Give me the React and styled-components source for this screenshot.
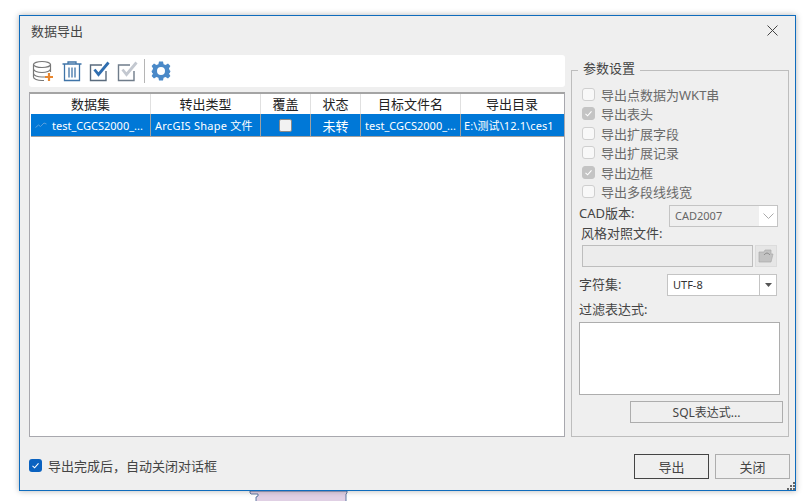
import React from 'react'
import styled, { createGlobalStyle } from 'styled-components'

const GlobalStyle = createGlobalStyle`
    html, body {
        margin: 0;
        padding: 0;
        background: #fff;
        overflow: hidden;
    }
    body {
        font-family: "Noto Sans", "Noto Sans CJK SC", sans-serif;
        font-size: 12px;
        color: #333;
    }
`

const Page = styled.div`
    width: 805px;
    height: 501px;
    padding: 15px 0 0 19px;
    box-sizing: border-box;
    overflow: hidden;
`

const Dialog = styled.div`
    position: relative;
    width: 777px;
    height: 476px;
    box-sizing: border-box;
    border: 1px solid #0f6cbd;
    background: #efefef;
    box-shadow: 0 0 6px rgba(0, 0, 0, 0.3);
    display: flex;
    flex-direction: column;
`

const TitleBar = styled.div`
    height: 39px;
    display: flex;
    align-items: center;
    justify-content: space-between;
    padding: 0 17px 10px 11px;
    box-sizing: border-box;
    font-size: 13px;
    color: #444;
`

const CloseButton = styled.div`
    width: 11px;
    height: 11px;
    display: flex;
`

const Body = styled.div`
    display: flex;
    gap: 6px;
    padding-left: 9px;
`

const LeftColumn = styled.div`
    width: 536px;
    display: flex;
    flex-direction: column;
    gap: 5px;
`

const Toolbar = styled.div`
    height: 32px;
    background: #fff;
    border-radius: 3px;
    display: flex;
    align-items: center;
    padding-left: 3px;
    box-sizing: border-box;
`

const ToolIcon = styled.svg`
    width: 22px;
    height: 22px;
    margin-right: ${p => p.$gap ?? 6}px;
    flex: none;
`

const ToolDivider = styled.div`
    width: 1px;
    height: 24px;
    background: #b5b5b5;
    margin: 0 5px 0 0;
`

const Table = styled.div`
    height: 345px;
    box-sizing: border-box;
    background: #fff;
    border: 1px solid #a8a8ae;
    border-top: 2px solid #a4a4a4;
    padding-left: 1px;
`

const Row = styled.div`
    display: grid;
    grid-template-columns: 120px 110px 50px 50px 100px 102px;
    height: ${p => p.$header ? 20 : 23}px;
    box-sizing: border-box;
`

const HeadCell = styled.div`
    display: flex;
    align-items: center;
    justify-content: center;
    padding-bottom: 4px;
    box-sizing: border-box;
    color: #222;
    font-size: 13px;
    border-right: 1px solid #e0e0e0;
    &:last-child { border-right: 0; }
`

const SelectedRow = styled(Row)`
    background: #0078d7;
    border-bottom: 1px solid #a0a0a0;
    color: #fff;
`

const Cell = styled.div`
    position: relative;
    display: flex;
    align-items: center;
    justify-content: ${p => p.$center ? 'center' : 'flex-start'};
    padding-left: ${p => p.$pad ?? 0}px;
    white-space: nowrap;
    overflow: hidden;
    font-size: ${p => p.$size ?? 11}px;
    letter-spacing: ${p => p.$spacing ?? 0}px;
    border-right: 1px solid #a0a0a0;
    &:last-child { border-right: 0; }
`

const RowMark = styled.svg`
    position: absolute;
    left: 4px;
    top: 7px;
    width: 12px;
    height: 8px;
`

const RowCheck = styled.span`
    width: 11px;
    height: 11px;
    background: #f2f2f2;
    border: 1px solid #8a8a8a;
    border-radius: 2px;
`

const Group = styled.div`
    position: relative;
    width: 218px;
    height: 367px;
    margin-top: 15px;
    box-sizing: border-box;
    border: 1px solid #bdbdbd;
    padding: 16px 0 0 7px;
`

const Legend = styled.div`
    position: absolute;
    top: -11px;
    left: 6px;
    padding: 0 5px;
    background: #efefef;
    font-size: 13px;
    line-height: 16px;
    color: #444;
`

const CheckList = styled.div`
    display: flex;
    flex-direction: column;
    gap: 5.5px;
    padding-left: 3px;
`

const CheckRow = styled.div`
    display: flex;
    align-items: center;
    gap: 6px;
    height: 14px;
    font-size: 13px;
    color: #6a6a6a;
    white-space: nowrap;
`

const Box = styled.span`
    width: 13px;
    height: 13px;
    box-sizing: border-box;
    border-radius: 3px;
    border: 1px solid ${p => p.$checked ? '#c4c4c4' : '#cfcfcf'};
    background: ${p => p.$checked ? '#c4c4c4' : '#f8f8f8'};
    display: flex;
    align-items: center;
    justify-content: center;
    flex: none;
`

const FieldRow = styled.div`
    display: flex;
    align-items: ${p => p.$align ?? 'center'};
    height: 22px;
    margin-top: ${p => p.$top ?? 0}px;
`

const FieldLabel = styled.div`
    width: ${p => p.$width}px;
    flex: none;
    font-size: 13px;
    color: #444;
    white-space: nowrap;
    line-height: 16px;
    padding-left: ${p => p.$pad ?? 0}px;
    padding-bottom: ${p => p.$bottomPad ?? 0}px;
    margin-top: ${p => p.$top ?? 0}px;
    margin-bottom: ${p => p.$bottom ?? 0}px;
    box-sizing: border-box;
`

const ComboBox = styled.div`
    width: ${p => p.$width}px;
    height: 22px;
    box-sizing: border-box;
    background: #fff;
    border: 1px solid #c4c4c4;
    display: flex;
    align-items: center;
    font-size: 11px;
    color: ${p => p.$disabled ? '#666' : '#333'};
`

const ComboText = styled.div`
    flex: 1;
    align-self: stretch;
    display: flex;
    align-items: center;
    padding-left: ${p => p.$pad}px;
    padding-bottom: 1px;
    box-sizing: border-box;
    background: ${p => p.$disabled ? '#efefef' : '#fff'};
`

const ComboArrow = styled.div`
    width: ${p => p.$width}px;
    align-self: stretch;
    display: flex;
    align-items: center;
    justify-content: center;
    box-sizing: border-box;
    border-left: ${p => p.$divider ? '1px solid #c4c4c4' : '0'};
`

const PathInput = styled.div`
    width: 171px;
    height: 22px;
    box-sizing: border-box;
    background: #ececec;
    border: 1px solid #bdbdbd;
`

const BrowseButton = styled.div`
    width: 22px;
    height: 22px;
    margin-left: 2px;
    box-sizing: border-box;
    border: 1px solid #dcdcdc;
    background: #e6e6e6;
    display: flex;
    align-items: center;
    justify-content: center;
`

const TextArea = styled.div`
    width: 201px;
    height: 73px;
    box-sizing: border-box;
    background: #fff;
    border: 1px solid #adadad;
`

const Button = styled.div`
    width: ${p => p.$width}px;
    height: ${p => p.$height}px;
    box-sizing: border-box;
    border: 1px solid ${p => p.$primary ? '#444' : '#adadad'};
    display: flex;
    align-items: center;
    justify-content: center;
    font-size: ${p => p.$size}px;
    color: #444;
`

const SqlRow = styled.div`
    display: flex;
    margin: 6px 0 0 51px;
`

const Footer = styled.div`
    display: flex;
    align-items: center;
    justify-content: space-between;
    height: 25px;
    margin-top: 17px;
    padding: 0 5px 0 9px;
`

const AutoClose = styled.div`
    display: flex;
    align-items: center;
    gap: 6px;
    padding-bottom: 3px;
    font-size: 13px;
    color: #444;
`

const BlueBox = styled.span`
    width: 13px;
    height: 13px;
    border-radius: 3px;
    background: #0a62c0;
    display: flex;
    align-items: center;
    justify-content: center;
`

const FooterButtons = styled.div`
    display: flex;
    gap: 6px;
`

const Grip = styled.svg`
    position: absolute;
    right: 0;
    bottom: 0;
    width: 8px;
    height: 8px;
`

const MapShape = styled.svg`
    display: block;
    width: 110px;
    height: 12px;
    margin-left: 225px;
`

const Tick = ({ color = '#fff' }) => (
    <svg width="9" height="9" viewBox="0 0 9 9">
        <path d="M1.5 4.8 L3.6 6.8 L7.5 2.4" fill="none" stroke={color} strokeWidth="1.1" />
    </svg>
)

const Arrow = () => (
    <svg width="11" height="7" viewBox="0 0 11 7">
        <path d="M0.5 0.5 L5.5 5.5 L10.5 0.5" fill="none" stroke="#aaa" />
    </svg>
)

const options = [
    { label: '导出点数据为WKT串' },
    { label: '导出表头', checked: true },
    { label: '导出扩展字段' },
    { label: '导出扩展记录' },
    { label: '导出边框', checked: true },
    { label: '导出多段线线宽' },
]

const headers = ['数据集', '转出类型', '覆盖', '状态', '目标文件名', '导出目录']

export default function App() {
    return (
        <Page>
            <GlobalStyle />
            <Dialog>
                <TitleBar>
                    <span>数据导出</span>
                    <CloseButton>
                        <svg width="11" height="11" viewBox="0 0 11 11">
                            <path d="M0.5 0.5 L10.5 10.5 M10.5 0.5 L0.5 10.5" stroke="#444" fill="none" />
                        </svg>
                    </CloseButton>
                </TitleBar>
                <Body>
                    <LeftColumn>
                        <Toolbar>
                            <ToolIcon viewBox="0 0 22 22" $gap={7}>
                                <g fill="none" stroke="#777" strokeWidth="1.2">
                                    <ellipse cx="10" cy="4.5" rx="8.5" ry="3" />
                                    <path d="M1.5 4.5 V17 C1.5 19 5.5 20.5 10 20.5 H12" />
                                    <path d="M18.5 4.5 V12" />
                                    <path d="M1.5 9 C1.5 11 5.5 12.5 10 12.5 S18.5 11 18.5 9" />
                                    <path d="M1.5 13.5 C1.5 15.5 5.5 17 10 17 H13" />
                                </g>
                                <path d="M17 13 V21 M13 17 H21" stroke="#e8862e" strokeWidth="2.2" fill="none" />
                            </ToolIcon>
                            <ToolIcon viewBox="0 0 22 22" $gap={6}>
                                <g fill="none" stroke="#3f74a8" strokeWidth="1.3">
                                    <path d="M1.5 4 H20.5 M7 4 V2 H15 V4" />
                                    <path d="M3.5 4 V20.5 H18.5 V4" />
                                    <path d="M8 7.5 V17.5 M11 7.5 V17.5 M14 7.5 V17.5" />
                                </g>
                            </ToolIcon>
                            <ToolIcon viewBox="0 0 22 22" $gap={6}>
                                <path d="M17 11 V20.5 H1.5 V5 H13" fill="none" stroke="#5a6b7d" strokeWidth="1.4" />
                                <path d="M5.5 9.5 L9.5 14.5 L19.5 2.5" fill="none" stroke="#2f6eb0" strokeWidth="2.8" />
                            </ToolIcon>
                            <ToolIcon viewBox="0 0 22 22" $gap={5}>
                                <path d="M17 11 V20.5 H1.5 V5 H13" fill="none" stroke="#6f7c8a" strokeWidth="1.4" />
                                <path d="M5.5 9.5 L9.5 14.5 L19.5 2.5" fill="none" stroke="#c3c8d0" strokeWidth="2.8" />
                            </ToolIcon>
                            <ToolDivider />
                            <ToolIcon viewBox="0 0 22 22">
                                <path
                                    fillRule="evenodd"
                                    fill="#4a89c8"
                                    d="M9 1.5 H13 L13.6 4.2 L15.6 5.1 L18 3.6 L20.4 6 L18.9 8.4 L19.8 10.4 L20.5 11 L19.8 13 L18.9 13.6 L20.4 16 L18 18.4 L15.6 16.9 L13.6 17.8 L13 20.5 H9 L8.4 17.8 L6.4 16.9 L4 18.4 L1.6 16 L3.1 13.6 L2.2 13 L1.5 11 L2.2 10.4 L3.1 8.4 L1.6 6 L4 3.6 L6.4 5.1 L8.4 4.2 Z M11 7 A4 4 0 1 0 11 15 A4 4 0 1 0 11 7 Z"
                                />
                            </ToolIcon>
                        </Toolbar>
                        <Table>
                            <Row $header>
                                {headers.map(h => <HeadCell key={h}>{h}</HeadCell>)}
                            </Row>
                            <SelectedRow>
                                <Cell $pad={21}>
                                    <RowMark viewBox="0 0 12 8">
                                        <path d="M0.5 6.5 L3.5 4 L5.5 5.5 L9 2 L11.5 3" fill="none" stroke="#5a9fdc" />
                                    </RowMark>
                                    test_CGCS2000_...
                                </Cell>
                                <Cell $pad={4} $spacing={0.25}>ArcGIS Shape 文件</Cell>
                                <Cell $center><RowCheck /></Cell>
                                <Cell $center $size={13}>未转</Cell>
                                <Cell $pad={4}>test_CGCS2000_...</Cell>
                                <Cell $pad={3} $spacing={0.1}>E:\测试\12.1\ces1</Cell>
                            </SelectedRow>
                        </Table>
                    </LeftColumn>
                    <Group>
                        <Legend>参数设置</Legend>
                        <CheckList>
                            {options.map(o => (
                                <CheckRow key={o.label}>
                                    <Box $checked={o.checked}>{o.checked && <Tick />}</Box>
                                    {o.label}
                                </CheckRow>
                            ))}
                        </CheckList>
                        <FieldRow $top={6.5} $align="flex-start">
                            <FieldLabel $width={90}>CAD版本:</FieldLabel>
                            <ComboBox $width={109} $disabled>
                                <ComboText $pad={5} $disabled>CAD2007</ComboText>
                                <ComboArrow $width={18}><Arrow /></ComboArrow>
                            </ComboBox>
                        </FieldRow>
                        <FieldLabel $width={200} $pad={2} $top={-2}>风格对照文件:</FieldLabel>
                        <FieldRow $top={4}>
                            <FieldLabel $width={3} />
                            <PathInput />
                            <BrowseButton>
                                <svg width="16" height="14" viewBox="0 0 16 14">
                                    <path d="M1 13 V3 H6 L7 1 H13 V5 H15 L13 13 Z" fill="#c2c2c2" stroke="#aaa" strokeWidth="0.7" />
                                    <path d="M6 6 C8 3.5 10 3.5 12 6" fill="none" stroke="#888" />
                                </svg>
                            </BrowseButton>
                        </FieldRow>
                        <FieldRow $top={7}>
                            <FieldLabel $width={88} $bottomPad={2}>字符集:</FieldLabel>
                            <ComboBox $width={110}>
                                <ComboText $pad={5}>UTF-8</ComboText>
                                <ComboArrow $width={17} $divider>
                                    <svg width="7" height="4" viewBox="0 0 7 4"><path d="M0 0 H7 L3.5 4 Z" fill="#555" /></svg>
                                </ComboArrow>
                            </ComboBox>
                        </FieldRow>
                        <FieldLabel $width={200} $top={5} $bottom={5}>过滤表达式:</FieldLabel>
                        <TextArea />
                        <SqlRow>
                            <Button $width={153} $height={22} $size={12}>SQL表达式...</Button>
                        </SqlRow>
                    </Group>
                </Body>
                <Footer>
                    <AutoClose>
                        <BlueBox><Tick /></BlueBox>
                        导出完成后，自动关闭对话框
                    </AutoClose>
                    <FooterButtons>
                        <Button $width={75} $height={25} $size={13} $primary>导出</Button>
                        <Button $width={75} $height={25} $size={13}>关闭</Button>
                    </FooterButtons>
                </Footer>
                <Grip viewBox="0 0 8 8">
                    <path d="M6 0 H8 V2 H6 Z M3 3 H5 V5 H3 Z M6 3 H8 V5 H6 Z M0 6 H2 V8 H0 Z M3 6 H5 V8 H3 Z M6 6 H8 V8 H6 Z" fill="#666" />
                </Grip>
            </Dialog>
            <MapShape viewBox="0 0 110 12">
                <path d="M6 0 V2 L7 3 H14 V5 L12 6 V12 H102 V3 L103 2 V0 Z" fill="#e0d0e4" stroke="#3d5f91" strokeWidth="0.8" />
            </MapShape>
        </Page>
    )
}
